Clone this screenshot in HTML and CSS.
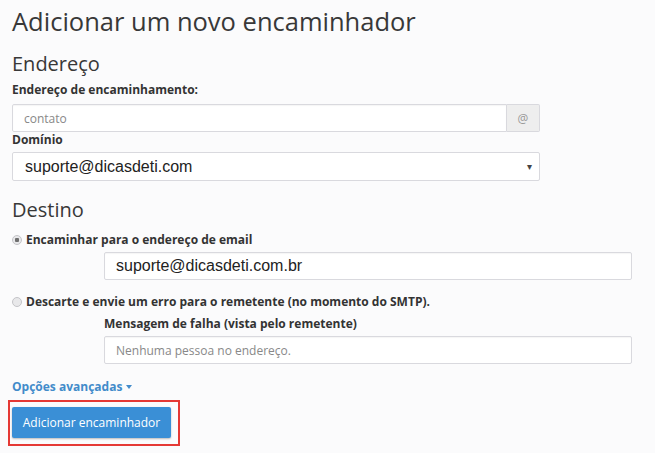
FILE: index.html
```html
<!DOCTYPE html>
<html lang="pt-BR">
<head>
    <meta charset="UTF-8">
    <title>Adicionar um novo encaminhador</title>
    <link rel="stylesheet" href="styles.css">
</head>
<body>
    <div class="page">
        <h1>Adicionar um novo encaminhador</h1>

        <h2>Endereço</h2>
        <div class="field first">
            <label class="label">Endereço de encaminhamento:</label>
            <div class="input-group">
                <input class="input" type="text" placeholder="contato">
                <span class="addon">@</span>
            </div>
        </div>
        <div class="field">
            <label class="label">Domínio</label>
            <div class="select">
                <span>suporte@dicasdeti.com</span>
                <span class="caret">▾</span>
            </div>
        </div>

        <h2 class="destino">Destino</h2>
        <div class="option">
            <label class="radio"><span class="dot checked"></span>Encaminhar para o endereço de email</label>
            <div class="indent">
                <input class="input value" type="text" value="suporte@dicasdeti.com.br">
            </div>
        </div>
        <div class="option second">
            <label class="radio"><span class="dot"></span>Descarte e envie um erro para o remetente (no momento do SMTP).</label>
            <div class="indent">
                <label class="label sub">Mensagem de falha (vista pelo remetente)</label>
                <input class="input" type="text" placeholder="Nenhuma pessoa no endereço.">
            </div>
        </div>

        <div class="advanced-row">
            <a class="advanced" href="#">Opções avançadas <span class="small-caret"></span></a>
        </div>

        <div class="highlight">
            <button class="btn">Adicionar encaminhador</button>
        </div>
    </div>
</body>
</html>
```

FILE: styles.css
```css
:root {
    --text: #333333;
    --muted: #888888;
    --border: #d9d9de;
    --link: #428bca;
    --primary: #3a8fd6;
}

body {
    margin: 0;
    background: #fbfbfc;
    color: var(--text);
    font-family: 'Open Sans', 'Noto Sans', sans-serif;
}

.page {
    padding: 0 12px;
}

h1 {
    font-size: 25.5px;
    font-weight: 400;
    line-height: 30px;
    margin: 6px 0 0 0;
    color: #383838;
}

h2 {
    font-size: 20px;
    font-weight: 400;
    line-height: 24px;
    margin: 16px 0 0 0;
    color: #383838;
}

.destino {
    margin-top: 17px;
}

.label {
    display: block;
    font-size: 12px;
    font-weight: 700;
    line-height: 16px;
    margin-bottom: 4px;
}

.field.first .label {
    margin-top: 6px;
    margin-bottom: 6px;
}

.input-group {
    display: flex;
    width: 528px;
    height: 28px;
}

.input {
    box-sizing: border-box;
    width: 528px;
    height: 28px;
    padding: 0 11px;
    border: 1px solid var(--border);
    border-radius: 2px;
    background: #ffffff;
    font-family: 'Open Sans', sans-serif;
    font-size: 12px;
    color: var(--text);
    box-shadow: inset 0 1px 1px rgba(0, 0, 0, 0.04);
}

.input::placeholder {
    color: var(--muted);
}

.input-group .input {
    flex: 1;
    width: auto;
    border-radius: 2px 0 0 2px;
}

.addon {
    display: flex;
    align-items: center;
    justify-content: center;
    width: 32px;
    border: 1px solid var(--border);
    border-left: 0;
    border-radius: 0 2px 2px 0;
    background: #eeeeee;
    color: #999999;
    font-size: 12px;
}

.select {
    box-sizing: border-box;
    display: flex;
    align-items: center;
    justify-content: space-between;
    width: 528px;
    height: 29px;
    padding: 0 7px 0 12px;
    border: 1px solid var(--border);
    border-radius: 2px;
    background: #ffffff;
    font-family: 'Liberation Sans', Arial, sans-serif;
    font-size: 16px;
    color: #222222;
}

.caret {
    font-size: 10px;
    color: #444444;
}

.value {
    font-family: 'Liberation Sans', Arial, sans-serif;
    font-size: 16px;
    color: #222222;
}

.option {
    margin-top: 10px;
}

.option.second {
    margin-top: 14px;
}

.radio {
    display: flex;
    align-items: center;
    font-size: 12px;
    font-weight: 700;
    line-height: 16px;
}

.dot {
    box-sizing: border-box;
    width: 10px;
    height: 10px;
    margin: 0 4px 0 0;
    border: 1px solid #c4c4c8;
    border-radius: 50%;
    background: #e8e8ea;
}

.dot.checked {
    background: radial-gradient(circle, #6f6f6f 0 2px, #e8e8ea 2.5px);
}

.indent {
    margin: 4px 0 0 92px;
}

.second .indent {
    margin-top: 6px;
}

.advanced-row {
    margin-top: 13px;
    line-height: 16px;
}

.advanced {
    display: inline-flex;
    align-items: center;
    gap: 4px;
    font-size: 12px;
    font-weight: 700;
    color: var(--link);
    text-decoration: none;
}

.small-caret {
    width: 0;
    height: 0;
    border-left: 3px solid transparent;
    border-right: 3px solid transparent;
    border-top: 4px solid var(--link);
}

.highlight {
    display: inline-block;
    margin: 5px 0 0 -4px;
    padding: 5px 7px 6px 2px;
    border: 2px solid #e53935;
}

.btn {
    display: block;
    width: 159px;
    height: 31px;
    border: 0;
    border-radius: 2px;
    background: var(--primary);
    color: #ffffff;
    font-family: 'Open Sans', sans-serif;
    font-size: 12px;
    box-shadow: 0 1px 2px rgba(0, 0, 0, 0.25);
}
```
